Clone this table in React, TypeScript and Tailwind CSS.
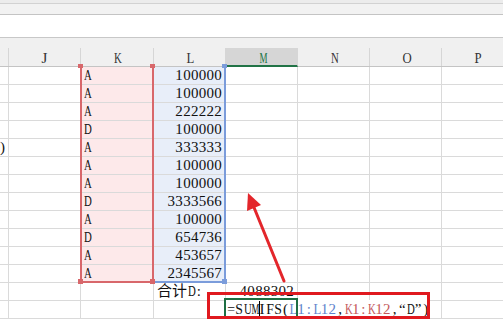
import React from 'react';

const rows: [string, string][] = [
  ['A', '100000'],
  ['A', '100000'],
  ['A', '222222'],
  ['D', '100000'],
  ['A', '333333'],
  ['A', '100000'],
  ['A', '100000'],
  ['D', '3333566'],
  ['A', '100000'],
  ['D', '654736'],
  ['A', '453657'],
  ['A', '2345567'],
];

const cols = ['', 'J', 'K', 'L', 'M', 'N', 'O', 'P'];
const grid = 'grid grid-cols-[9px_72px_73px_72px_72px_72px_72px_72px]';
const cell = 'h-[18px] border-r border-b border-[#dadada] leading-[17px] whitespace-nowrap overflow-visible';

// squeeze wide serif capitals into a half-width slot, like SimSun
function squeeze(ch: string) {
  if (ch === 'M') return 'scale-x-[0.6]';
  if ('UKDAN'.includes(ch)) return 'scale-x-[0.72]';
  if ('LOP'.includes(ch)) return 'scale-x-[0.85]';
  if ('=SF'.includes(ch)) return 'scale-x-[0.92]';
  return '';
}

function Mono({ text }: { text: string }) {
  return (
    <>
      {[...text].map((ch, i) => (
        <span key={i} className={`inline-block w-[7.8px] text-center ${squeeze(ch)}`}>
          {ch}
        </span>
      ))}
    </>
  );
}

export default function App() {
  return (
    <div
      className="relative w-[503px] h-[319px] overflow-hidden bg-white text-[15px] text-[#111]"
      style={{ fontFamily: '"Liberation Serif", "Noto Sans CJK SC", serif' }}
    >
      {/* toolbar strips */}
      <div className="h-[4px] bg-[#ececec] border-b border-[#d2d2d2]" />
      <div className="h-[11px] bg-[#f2f2f2] border-b border-[#c4c4c4]" />
      <div className="h-[23px] bg-white border-b border-[#c8c8c8]" />
      <div className="h-[10px] bg-[#f0f0f0]" />

      {/* column header */}
      <div className={`${grid} h-[19px] bg-[#f0f0f0] border-b border-[#c4c4c4]`}>
        {cols.map((c, i) => (
          <div
            key={i}
            className={`h-[18px] border-r border-[#d6d6d6] text-center leading-[20px] ${
              c === 'M' ? 'bg-[#d6d6d6] text-[#217346] border-b-2 border-b-[#217346] h-[19px]' : 'text-[#333]'
            }`}
          >
            <Mono text={c} />
          </div>
        ))}
      </div>

      {/* data rows */}
      {rows.map(([k, l], i) => (
        <div key={i} className={grid}>
          <div className={cell}>{i === 4 ? ')' : ''}</div>
          <div className={cell} />
          <div className={`${cell} bg-[#fde9ea] pl-[2px]`}>
            <Mono text={k} />
          </div>
          <div className={`${cell} bg-[#e8eef9] text-right pr-[3px]`}>
            <Mono text={l} />
          </div>
          <div className={cell} />
          <div className={cell} />
          <div className={cell} />
          <div className={cell} />
        </div>
      ))}

      {/* total row */}
      <div className={grid}>
        <div className={cell} />
        <div className={cell} />
        <div className={cell} />
        <div className={`${cell} pl-[3px]`}>
          <span className="text-[15px]">合计</span>
          <Mono text="D:" />
        </div>
        <div className={`${cell} text-right pr-[3px]`}>
          <Mono text="4088302" />
        </div>
        <div className={cell} />
        <div className={cell} />
        <div className={cell} />
      </div>

      {/* row 14 */}
      <div className={grid}>
        {cols.map((_, i) => (
          <div key={i} className={cell} />
        ))}
      </div>

      {/* selection outlines */}
      <div className="absolute left-[80px] top-[66px] w-[74px] h-[217px] border-l-2 border-r-2 border-b-2 border-[#d8676b]" />
      <div className="absolute left-[154px] top-[66px] w-[72px] h-[217px] border-r-2 border-b-2 border-[#7b9cdb]" />
      <div className="absolute left-[78px] top-[64px] w-[5px] h-[4px] bg-[#d8676b]" />
      <div className="absolute left-[150px] top-[64px] w-[5px] h-[4px] bg-[#d8676b]" />
      <div className="absolute left-[222px] top-[64px] w-[5px] h-[4px] bg-[#7b9cdb]" />
      <div className="absolute left-[78px] top-[279px] w-[5px] h-[5px] bg-[#d8676b]" />
      <div className="absolute left-[150px] top-[279px] w-[5px] h-[5px] bg-[#d8676b]" />
      <div className="absolute left-[222px] top-[279px] w-[5px] h-[5px] bg-[#7b9cdb]" />

      {/* editing cell */}
      <div className="absolute left-[226px] top-[300px] w-[204px] h-[18px] bg-white pl-[1px] leading-[19px] whitespace-nowrap overflow-hidden">
        <Mono text="=SUMIFS(" />
        <span className="text-[#5f84cc]">
          <Mono text="L1:L12" />
        </span>
        <Mono text="," />
        <span className="text-[#c55a5c]">
          <Mono text="K1:K12" />
        </span>
        <Mono text=",“D”)" />
      </div>
      <div className="absolute left-[224px] top-[298px] w-[74px] h-[21px] border-2 border-[#1f6e43]" />
      <div className="absolute left-[259px] top-[301px] w-px h-[16px] bg-black" />

      {/* annotation */}
      <div className="absolute left-[207px] top-[292px] w-[223px] h-[27px] border-[3px] border-[#e0191f]" />
      <svg className="absolute left-0 top-0" width="503" height="319" viewBox="0 0 503 319">
        <line x1="284" y1="281" x2="253" y2="205" stroke="#e3262b" strokeWidth="3" strokeLinecap="round" />
        <polygon points="248,193 261,205 247,211" fill="#e3262b" />
      </svg>
    </div>
  );
}
